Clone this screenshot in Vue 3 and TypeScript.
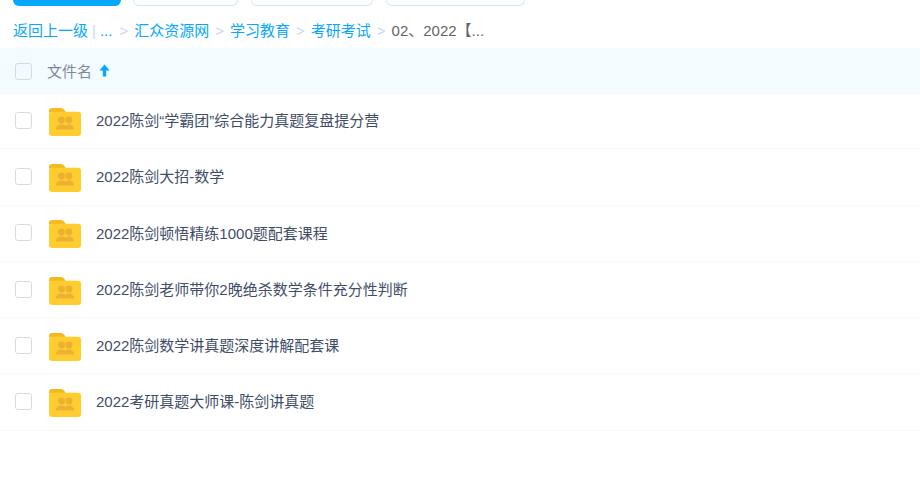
<template>
  <div class="page">
    <div class="toolbar">
      <span class="btn primary"></span>
      <span class="btn b2"></span>
      <span class="btn b3"></span>
      <span class="btn b4"></span>
    </div>
    <div class="crumbs">
      <a class="link">返回上一级</a>
      <span class="bar">|</span>
      <a class="link dots">...</a>
      <template v-for="c in crumbs" :key="c">
        <span class="sep">&gt;</span>
        <a class="link">{{ c }}</a>
      </template>
      <span class="sep">&gt;</span>
      <span class="current">02、2022【...</span>
    </div>
    <div class="head">
      <span class="check"></span>
      <span class="head-name">文件名</span>
      <svg class="arrow" width="11" height="13" viewBox="0 0 11 13">
        <path d="M5.5 0.5 L10.6 6.4 H7.2 V12.5 H3.8 V6.4 H0.4 Z" fill="#06a7ff" />
      </svg>
    </div>
    <div class="list">
      <div v-for="f in files" :key="f" class="row">
        <span class="check"></span>
        <svg class="folder" width="32" height="28" viewBox="0 0 32 28">
          <path d="M0 3 Q0 0 3 0 H12 Q14 0 15 1.5 L17 4.5 H0 Z" fill="#f5b81f" />
          <rect x="0" y="3.7" width="32" height="24.3" rx="3" fill="#ffcd2e" />
          <g fill="#eeaf33">
            <circle cx="12.5" cy="12" r="3.4" />
            <circle cx="20" cy="12" r="3.4" />
            <path d="M7 21.5 Q7 16.5 12.5 16.5 Q15 16.5 16.2 17.8 Q17.6 16.5 20 16.5 Q25 16.5 25 21.5 Z" />
          </g>
        </svg>
        <span class="name">{{ f }}</span>
      </div>
    </div>
  </div>
</template>

<script setup lang="ts">
const crumbs: string[] = ['汇众资源网', '学习教育', '考研考试']

const files: string[] = [
  '2022陈剑“学霸团”综合能力真题复盘提分营',
  '2022陈剑大招-数学',
  '2022陈剑顿悟精练1000题配套课程',
  '2022陈剑老师带你2晚绝杀数学条件充分性判断',
  '2022陈剑数学讲真题深度讲解配套课',
  '2022考研真题大师课-陈剑讲真题'
]
</script>

<style>
html,
body {
  background: #fff;
  overflow: hidden;
}
</style>

<style scoped>
.page {
  width: 920px;
  height: 495px;
  overflow: hidden;
  font-family: "Liberation Sans", "Noto Sans CJK SC", sans-serif;
  font-size: 15px;
}

.toolbar {
  display: flex;
  height: 6px;
  padding-left: 13px;
  gap: 12px;
}

.btn {
  display: block;
  height: 6px;
  box-sizing: border-box;
  border: 1px solid #cfe9ff;
  border-top: 0;
  border-radius: 0 0 6px 6px;
}

.primary {
  width: 108px;
  background: #06a7ff;
  border: 0;
}

.b2 {
  width: 105px;
}

.b3 {
  width: 122px;
  margin-left: 1px;
}

.b4 {
  width: 139px;
  margin-left: 1px;
}

.crumbs {
  display: flex;
  align-items: center;
  height: 42px;
  padding: 8px 0 0 13px;
  box-sizing: border-box;
  line-height: 20px;
  color: #666;
}

.link {
  color: #06a7ff;
}

.bar {
  color: #c5d9f1;
  margin: 0 4px;
}

.dots {
  margin-right: 1px;
}

.sep {
  color: #c5d9f1;
  margin: 0 6px;
}

.current {
  color: #666;
}

.head {
  display: flex;
  align-items: center;
  height: 46px;
  padding-left: 15px;
  background: #f4fbff;
}

.check {
  flex: none;
  box-sizing: border-box;
  width: 17px;
  height: 17px;
  border: 1px solid #d5dbe6;
  border-radius: 3px;
  background: #fff;
}

.head .check {
  background: transparent;
}

.head-name {
  margin-left: 15px;
  margin-bottom: 2px;
  color: #818999;
}

.arrow {
  margin-left: 7px;
  margin-bottom: 2px;
}

.list {
  margin-top: -1px;
}

.row {
  display: flex;
  align-items: center;
  box-sizing: border-box;
  height: 56.25px;
  padding-left: 15px;
  padding-bottom: 1px;
  border-bottom: 1px solid #f7f8fc;
}

.row .check {
  margin-top: 0.5px;
}

.folder {
  flex: none;
  margin-left: 17px;
  margin-top: 3.5px;
}

.name {
  margin-left: 15px;
  margin-bottom: 1px;
  color: #424e67;
}
</style>
